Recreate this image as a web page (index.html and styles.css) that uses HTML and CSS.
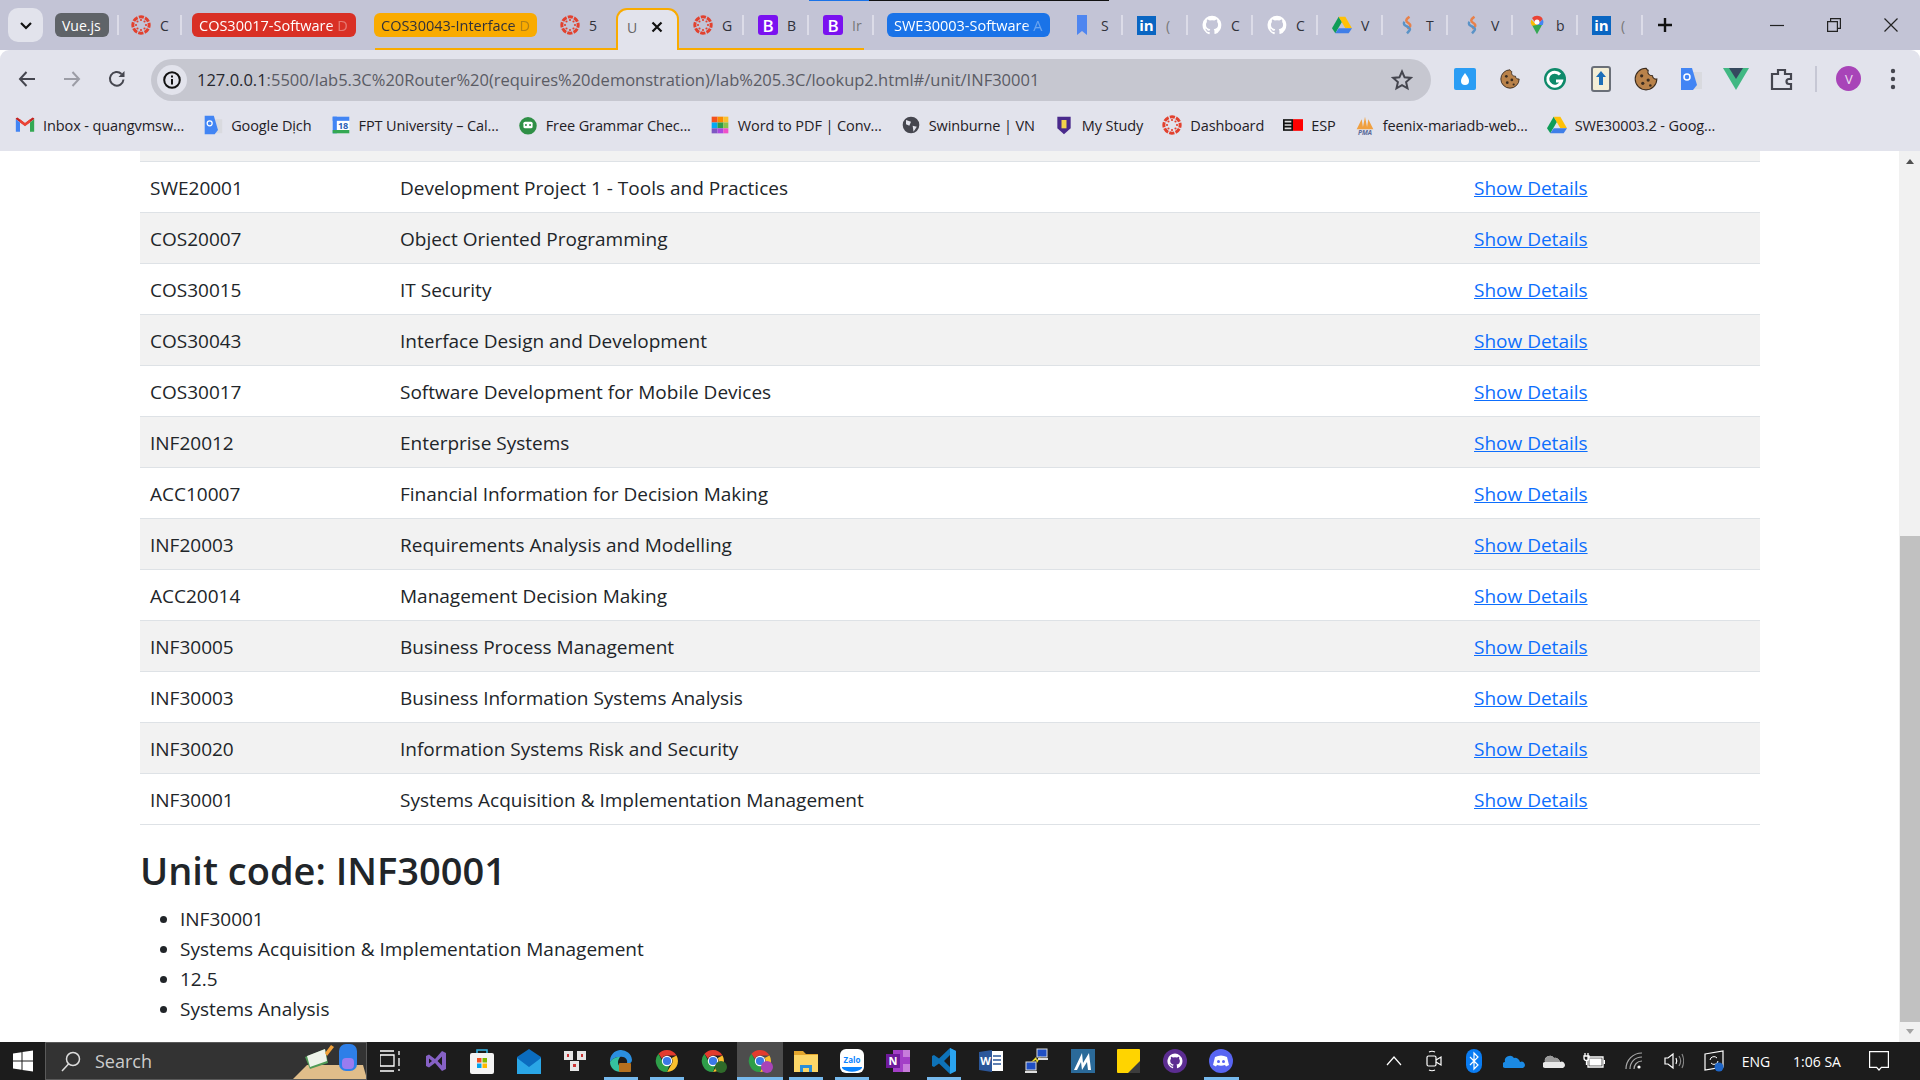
FILE: index.html
```html
<!DOCTYPE html>
<html lang="en">
<head>
    <meta charset="UTF-8">
    <meta name="viewport" content="width=device-width, initial-scale=1.0">
    <title>Unit lookup</title>
    <link rel="stylesheet" href="styles.css">
</head>
<body>
    <svg class="sprites" width="0" height="0">
        <symbol id="canvas" viewBox="0 0 24 24">
            <circle cx="12" cy="12" r="9.800" fill="none" stroke="#e2412e" stroke-width="3.600" stroke-dasharray="6.200 1.500" stroke-dashoffset="3"/>
            <g fill="#e2412e">
                <circle cx="12" cy="6" r="1.300"/><circle cx="12" cy="18" r="1.300"/>
                <circle cx="6" cy="12" r="1.300"/><circle cx="18" cy="12" r="1.300"/>
                <circle cx="7.800" cy="7.800" r="1.300"/><circle cx="16.200" cy="7.800" r="1.300"/>
                <circle cx="7.800" cy="16.200" r="1.300"/><circle cx="16.200" cy="16.200" r="1.300"/>
            </g>
        </symbol>
        <symbol id="github" viewBox="0 0 24 24">
            <path fill="#fff" d="M12 .8a11.4 11.4 0 0 0-3.600 22.200c.6.100.8-.2.800-.6v-2.100c-3.200.7-3.800-1.400-3.800-1.400-.5-1.300-1.300-1.700-1.300-1.700-1-.7.100-.7.100-.7 1.200.1 1.800 1.200 1.800 1.200 1 1.800 2.700 1.300 3.300 1 .1-.8.400-1.300.7-1.600-2.500-.3-5.200-1.300-5.200-5.600 0-1.200.4-2.200 1.200-3-.1-.3-.5-1.500.1-3 0 0 1-.3 3.100 1.200a11 11 0 0 1 5.700 0c2.200-1.500 3.100-1.200 3.100-1.200.6 1.600.2 2.700.1 3 .7.800 1.200 1.800 1.200 3 0 4.400-2.700 5.300-5.200 5.600.4.400.8 1 .8 2.100v3.100c0 .3.200.7.800.6A11.400 11.400 0 0 0 12 .8z"/>
        </symbol>
        <symbol id="drive" viewBox="0 0 24 22">
            <path fill="#0f9d58" d="M8 1 0 15l4 6 8-14z"/>
            <path fill="#ffc107" d="M8 1h8l8 14h-8z"/>
            <path fill="#3f7ee8" d="M4 21h16l4-6H8z"/>
        </symbol>
        <symbol id="flame" viewBox="0 0 24 24">
            <path fill="none" stroke="#e8814a" stroke-width="3" d="M15 2c-6 4-4 6-1 8s3 4-2 6"/>
            <path fill="none" stroke="#5b93c7" stroke-width="3" d="M9 8c-3 4 2 5 5 7s1 4-2 7"/>
        </symbol>
        <symbol id="maps" viewBox="0 0 24 24">
            <path fill="#34a853" d="M12 23 6 12h12z"/>
            <path fill="#ea4335" d="M12 1a8 8 0 0 0-6 2.700l6 8.300 7-7a8 8 0 0 0-7-4z"/>
            <path fill="#4285f4" d="M19 5a8 8 0 0 1 0 7l-7 0z"/>
            <path fill="#fbbc04" d="M5 5.500A8 8 0 0 0 6 13l6-1z"/>
            <circle cx="12" cy="8.500" r="3" fill="#fff"/>
        </symbol>
        <symbol id="translate" viewBox="0 0 24 24">
            <path fill="#d9dadf" d="M10 5h13v17H12z"/>
            <path fill="#4285f4" d="M2 1h11l5 17-4 5H2z"/>
            <circle cx="8" cy="10" r="3" fill="none" stroke="#fff" stroke-width="1.500"/>
        </symbol>
        <symbol id="cookie" viewBox="0 0 24 24">
            <path fill="#b9824a" stroke="#3a2c20" d="M12 2a10 10 0 1 0 10 10c-2 .5-4-1-4-3-3 0-5-2-4-5-1 0-1-1-2-2z"/>
            <circle cx="8" cy="9" r="1.500" fill="#3a2c20"/>
            <circle cx="14" cy="13" r="1.500" fill="#3a2c20"/>
            <circle cx="9" cy="16" r="1.500" fill="#3a2c20"/>
            <circle cx="16" cy="18" r="1.200" fill="#3a2c20"/>
        </symbol>
        <symbol id="chrome" viewBox="0 0 24 24">
            <path fill="#e33b2e" d="M12 1a11 11 0 0 1 9.500 5.500H12A5.500 5.500 0 0 0 7 9.800L3.500 4.800A11 11 0 0 1 12 1z"/>
            <path fill="#fbc02d" d="M21.500 6.500A11 11 0 0 1 12 23l4.800-8.300A5.500 5.500 0 0 0 16.700 9z"/>
            <path fill="#2e9e49" d="M3.500 4.800 7.800 13a5.500 5.500 0 0 0 6.500 3.500L12 23A11 11 0 0 1 3.500 4.800z"/>
            <circle cx="12" cy="12" r="5.200" fill="#fff"/>
            <circle cx="12" cy="12" r="4.100" fill="#3b78e7"/>
        </symbol>
    </svg>

    <div class="tabstrip">
        <span class="top-line"></span>
        <span class="group-line"></span>
        <button class="tab-search">
            <svg width="16" height="16" viewBox="0 0 16 16"><path d="M3 6l5 5 5-5" fill="none" stroke="#111" stroke-width="2.200"/></svg>
        </button>
        <span class="chip chip-vue">Vue.js</span>
        <div class="tab tab-first"><svg class="ico"><use href="#canvas"/></svg><span>C</span></div>
        <span class="chip chip-red"><span class="fade">COS30017-Software D</span></span>
        <span class="chip chip-orange"><span class="fade">COS30043-Interface D</span></span>
        <div class="tab tab-plain"><svg class="ico"><use href="#canvas"/></svg><span>5</span></div>
        <div class="tab-active">
            <span>U</span>
            <svg width="14" height="14" viewBox="0 0 14 14"><path d="M2.500 2.500l9 9m0-9l-9 9" stroke="#111" stroke-width="2.200"/></svg>
        </div>
        <div class="tab"><svg class="ico"><use href="#canvas"/></svg><span>G</span></div>
        <div class="tab"><span class="bs">B</span><span>B</span></div>
        <div class="tab"><span class="bs">B</span><span class="dim">Ir</span></div>
        <span class="chip chip-blue"><span class="fade">SWE30003-Software A</span></span>
        <div class="tab"><svg class="ico" viewBox="0 0 20 20"><path fill="#4f86f0" d="M5 0h10v20l-5-4-5 4z"/></svg><span>S</span></div>
        <div class="tab"><span class="in">in</span><span class="dim">(</span></div>
        <div class="tab"><svg class="ico"><use href="#github"/></svg><span>C</span></div>
        <div class="tab"><svg class="ico"><use href="#github"/></svg><span>C</span></div>
        <div class="tab"><svg class="ico"><use href="#drive"/></svg><span>V</span></div>
        <div class="tab"><svg class="ico"><use href="#flame"/></svg><span>T</span></div>
        <div class="tab"><svg class="ico"><use href="#flame"/></svg><span>V</span></div>
        <div class="tab"><svg class="ico"><use href="#maps"/></svg><span>b</span></div>
        <div class="tab"><span class="in">in</span><span class="dim">(</span></div>
        <svg class="new-tab" width="16" height="16" viewBox="0 0 16 16"><path d="M8 1v14M1 8h14" stroke="#111" stroke-width="2.400"/></svg>
        <div class="window-btns">
            <svg width="14" height="14" viewBox="0 0 14 14"><path d="M0 7.500h14" stroke="#222" stroke-width="1.200"/></svg>
            <svg width="14" height="14" viewBox="0 0 14 14"><path d="M.6 3.600h9.800v9.800H.6zM3.600 3.400V.6h9.800v9.800h-2.800" fill="none" stroke="#222" stroke-width="1.200"/></svg>
            <svg width="14" height="14" viewBox="0 0 14 14"><path d="M.5.500l13 13m0-13l-13 13" stroke="#222" stroke-width="1.200"/></svg>
        </div>
    </div>

    <div class="toolbar">
        <div class="nav-btns">
            <svg width="20" height="20" viewBox="0 0 20 20"><path d="M18 10H3m6.500-7L3 10l6.500 7" fill="none" stroke="#45464f" stroke-width="2"/></svg>
            <svg width="20" height="20" viewBox="0 0 20 20"><path d="M2 10h15m-6.500-7L17 10l-6.500 7" fill="none" stroke="#9c9da6" stroke-width="2"/></svg>
            <svg width="20" height="20" viewBox="0 0 20 20"><path d="M16.500 10.500A6.800 6.800 0 1 1 14.500 5" fill="none" stroke="#45464f" stroke-width="2"/><path d="M17.500 2v6h-6z" fill="#45464f"/></svg>
        </div>
        <div class="omnibox">
            <span class="site-info">
                <svg width="20" height="20" viewBox="0 0 20 20"><circle cx="10" cy="10" r="7.800" fill="none" stroke="#111" stroke-width="2"/><path d="M10 9v5.500M10 5.500v2" stroke="#111" stroke-width="2"/></svg>
            </span>
            <span class="url">127.0.0.1<span class="url-path">:5500/lab5.3C%20Router%20(requires%20demonstration)/lab%205.3C/lookup2.html#/unit/INF30001</span></span>
            <svg class="star" width="22" height="22" viewBox="0 0 22 22"><path d="M11 2.500l2.600 5.800 6.200.6-4.700 4.200 1.400 6.200L11 16.100l-5.500 3.200 1.400-6.200-4.700-4.200 6.200-.6z" fill="none" stroke="#45464f" stroke-width="2"/></svg>
        </div>
        <div class="extensions">
            <span class="ext"><svg width="24" height="24" viewBox="0 0 24 24"><rect x="1" y="1" width="22" height="22" rx="2" fill="#2a9df4"/><path d="M12 6c3 4 4 6 4 8a4 4 0 0 1-8 0c0-2 1-4 4-8z" fill="#fff"/></svg></span>
            <span class="ext"><svg width="22" height="22" viewBox="0 0 24 24"><use href="#cookie"/></svg></span>
            <span class="ext"><svg width="24" height="24" viewBox="0 0 24 24"><circle cx="12" cy="12" r="11" fill="#0e8a6a"/><path d="M17 7.500A7 7 0 1 0 18.500 14H13" fill="none" stroke="#fff" stroke-width="3"/></svg></span>
            <span class="ext"><svg width="24" height="26" viewBox="0 0 24 26"><rect x="3" y="1" width="18" height="24" rx="2" fill="#f3eed6" stroke="#6a6f78" stroke-width="2"/><path d="M12 5l5 6h-3v8h-4v-8H7z" fill="#1c6fb8"/></svg></span>
            <span class="ext"><svg width="26" height="26" viewBox="0 0 24 24"><use href="#cookie"/></svg></span>
            <span class="ext"><svg width="24" height="24" viewBox="0 0 24 24"><use href="#translate"/></svg></span>
            <span class="ext"><svg width="26" height="24" viewBox="0 0 26 24"><path d="M0 1h26L13 23z" fill="#41b883"/><path d="M6 1h14l-7 11z" fill="#35495e"/></svg></span>
            <span class="ext"><svg width="24" height="24" viewBox="0 0 24 24"><path d="M2 7h6V3h7v4h6v5h-2a2.500 2.500 0 0 0 0 5h2v5H2z" fill="none" stroke="#45464f" stroke-width="2.200"/></svg></span>
            <span class="ext-sep"></span>
            <span class="avatar">V</span>
            <svg class="menu" width="6" height="24" viewBox="0 0 6 24"><circle cx="3" cy="4" r="2.200" fill="#45464f"/><circle cx="3" cy="12" r="2.200" fill="#45464f"/><circle cx="3" cy="20" r="2.200" fill="#45464f"/></svg>
        </div>
    </div>

    <div class="bookmarks">
        <a class="bm"><svg class="bm-ico" viewBox="0 0 24 24"><path fill="#c5221f" d="M1 5l11 8 11-8v-1l-2-1-9 7-9-7-2 1z"/><path fill="#4285f4" d="M1 5v15h5V9z"/><path fill="#34a853" d="M23 5v15h-5V9z"/><path fill="#ea4335" d="M6 9l6 4.500L18 9V5l-6 4.500L6 5z"/></svg><span>Inbox - quangvmsw...</span></a>
        <a class="bm"><svg class="bm-ico"><use href="#translate"/></svg><span>Google Dịch</span></a>
        <a class="bm"><svg class="bm-ico" viewBox="0 0 24 24"><rect x="2" y="2" width="20" height="20" fill="#fff"/><path d="M2 2h20v5H2z" fill="#4285f4"/><path d="M2 2h5v20H2z" fill="#4285f4"/><path d="M2 18h20v4H2z" fill="#34a853"/><text x="14.500" y="16.500" text-anchor="middle" class="cal-num">18</text></svg><span>FPT University – Cal...</span></a>
        <a class="bm"><svg class="bm-ico" viewBox="0 0 24 24"><circle cx="12" cy="13" r="10.500" fill="#2f8f46"/><rect x="6.500" y="8" width="11" height="8" rx="2" fill="#fff"/><circle cx="9.500" cy="12" r="1.200" fill="#2f8f46"/><circle cx="14.500" cy="12" r="1.200" fill="#2f8f46"/></svg><span>Free Grammar Chec...</span></a>
        <a class="bm"><svg class="bm-ico" viewBox="0 0 24 24"><path fill="#f4511e" d="M2 2h7v7H2z"/><path fill="#fb8c00" d="M9 2h7v7H9z"/><path fill="#fbc02d" d="M16 2h6v7h-6z"/><path fill="#03a9f4" d="M2 9h7v7H2z"/><path fill="#2e9e49" d="M9 9h7v7H9z"/><path fill="#8bc34a" d="M16 9h6v7h-6z"/><path fill="#7e57c2" d="M2 16h7v6H2z"/><path fill="#ab47e0" d="M9 16h7v6H9z"/><path fill="#f050c8" d="M16 16h6v6h-6z"/></svg><span>Word to PDF | Conv...</span></a>
        <a class="bm"><svg class="bm-ico" viewBox="0 0 24 24"><circle cx="12" cy="12" r="10" fill="#45464f"/><path d="M6 6l6 2-2 5-4-2zM14 13l5 1-4 6z" fill="#e2e3ec"/></svg><span>Swinburne | VN</span></a>
        <a class="bm"><svg class="bm-ico" viewBox="0 0 24 24"><path d="M4 2h16v14l-8 7-8-7z" fill="#4a2a8c"/><path d="M9 6h6v10H9z" fill="#f2d34b"/></svg><span>My Study</span></a>
        <a class="bm"><svg class="bm-ico"><use href="#canvas"/></svg><span>Dashboard</span></a>
        <a class="bm"><svg class="bm-ico" viewBox="0 0 24 24"><rect y="5" width="12" height="14" fill="#111"/><rect x="12" y="5" width="12" height="14" fill="#f00"/><path d="M2 8h8M2 12h8M2 16h8" stroke="#ddd" stroke-width="2"/></svg><span>ESP</span></a>
        <a class="bm"><svg class="bm-ico" viewBox="0 0 24 24"><path d="M2 17L8 5l2 12zM9 17l3-15 3 15zM14 17l2-12 6 12z" fill="#f0a040"/><text x="12" y="24" text-anchor="middle" class="pma">PMA</text></svg><span>feenix-mariadb-web...</span></a>
        <a class="bm"><svg class="bm-ico"><use href="#drive"/></svg><span>SWE30003.2 - Goog...</span></a>
    </div>

    <div class="viewport">
        <main class="page">
            <table class="units">
                <colgroup>
                    <col class="col-code">
                    <col>
                    <col class="col-link">
                </colgroup>
                <tr class="cut-row"><td colspan="3"></td></tr>
                <tr><td>SWE20001</td><td>Development Project 1 - Tools and Practices</td><td><a href="#">Show Details</a></td></tr>
                <tr><td>COS20007</td><td>Object Oriented Programming</td><td><a href="#">Show Details</a></td></tr>
                <tr><td>COS30015</td><td>IT Security</td><td><a href="#">Show Details</a></td></tr>
                <tr><td>COS30043</td><td>Interface Design and Development</td><td><a href="#">Show Details</a></td></tr>
                <tr><td>COS30017</td><td>Software Development for Mobile Devices</td><td><a href="#">Show Details</a></td></tr>
                <tr><td>INF20012</td><td>Enterprise Systems</td><td><a href="#">Show Details</a></td></tr>
                <tr><td>ACC10007</td><td>Financial Information for Decision Making</td><td><a href="#">Show Details</a></td></tr>
                <tr><td>INF20003</td><td>Requirements Analysis and Modelling</td><td><a href="#">Show Details</a></td></tr>
                <tr><td>ACC20014</td><td>Management Decision Making</td><td><a href="#">Show Details</a></td></tr>
                <tr><td>INF30005</td><td>Business Process Management</td><td><a href="#">Show Details</a></td></tr>
                <tr><td>INF30003</td><td>Business Information Systems Analysis</td><td><a href="#">Show Details</a></td></tr>
                <tr><td>INF30020</td><td>Information Systems Risk and Security</td><td><a href="#">Show Details</a></td></tr>
                <tr><td>INF30001</td><td>Systems Acquisition &amp; Implementation Management</td><td><a href="#">Show Details</a></td></tr>
            </table>
            <h2>Unit code: INF30001</h2>
            <ul>
                <li>INF30001</li>
                <li>Systems Acquisition &amp; Implementation Management</li>
                <li>12.5</li>
                <li>Systems Analysis</li>
            </ul>
        </main>
        <div class="scrollbar">
            <span class="arrow arrow-up"></span>
            <span class="thumb"></span>
            <span class="arrow arrow-down"></span>
        </div>
    </div>

    <footer class="taskbar">
        <span class="start">
            <svg width="22" height="22" viewBox="0 0 22 22"><path fill="#fff" d="M1 3.500l8.500-1.200v8.200H1zM10.500 2.100L21 .6v9.900H10.500zM1 11.500h8.500v8.200L1 18.500zM10.500 11.500H21v9.900l-10.500-1.500z"/></svg>
        </span>
        <div class="search">
            <svg width="22" height="22" viewBox="0 0 22 22"><circle cx="13" cy="9" r="6.500" fill="none" stroke="#ddd" stroke-width="1.500"/><path d="M8.500 14L2 21" stroke="#ddd" stroke-width="1.500"/></svg>
            <span>Search</span>
            <svg class="search-art" width="74" height="38" viewBox="0 0 74 38"><path d="M0 38l14-14h56l4 14z" fill="#e0bd8a"/><path d="M12 16l20-8 3 14-18 6z" fill="#4f9a55"/><path d="M14 15l18-7 2 12-17 6z" fill="#eef3ea"/><path d="M32 12l6-8 3 2-7 9z" fill="#f2a23a"/><rect x="46" y="3" width="18" height="27" rx="7" fill="#2e7fe8"/><rect x="49" y="17" width="12" height="11" rx="4" fill="#9a7cf0"/></svg>
        </div>
        <div class="apps">
            <span class="app"><svg width="20" height="22" viewBox="0 0 20 22" fill="none" stroke="#fff" stroke-width="1.300"><path d="M0 1h14M0 5h14v11H0zM0 21h14M19 1v4M19 8v8M19 19v2"/></svg></span>
            <span class="app"><svg width="22" height="24" viewBox="0 0 22 24"><path fill="#8661c5" d="M1 7l3-1.500L10 10 17 2l4 2v16l-4 2-7-8-6 4.500L1 17zM4 9.500v5L7 12zM17 7.500L12.500 12l4.500 4.500z"/></svg></span>
            <span class="app"><svg width="24" height="26" viewBox="0 0 24 26"><rect y="5" width="24" height="21" rx="2" fill="#f3f3f3"/><path d="M7 5V2h10v3" fill="none" stroke="#35b6e8" stroke-width="1.500"/><path fill="#f25022" d="M7 10h4.500v4.500H7z"/><path fill="#7fba00" d="M12.500 10H17v4.500h-4.500z"/><path fill="#00a4ef" d="M7 15.500h4.500V20H7z"/><path fill="#ffb900" d="M12.500 15.500H17V20h-4.500z"/></svg></span>
            <span class="app"><svg width="24" height="26" viewBox="0 0 24 26"><path fill="#0b6cbf" d="M0 9l12-8 12 8v4L12 20 0 13z"/><path fill="#2aa6e6" d="M0 10v16h24V10l-12 9z"/></svg></span>
            <span class="app"><svg width="24" height="24" viewBox="0 0 24 24"><rect x="1" y="2" width="9" height="9" fill="#e6e6e6"/><rect x="14" y="2" width="9" height="9" fill="#e6e6e6"/><rect x="7" y="12" width="9" height="10" fill="#e6e6e6"/><rect x="4" y="5" width="2" height="3" fill="#c33"/><rect x="18" y="5" width="2" height="3" fill="#c33"/><rect x="10" y="15" width="3" height="3" fill="#c33"/></svg></span>
            <span class="app run-edge"><svg width="24" height="24" viewBox="0 0 24 24"><path d="M1 13A11 11 0 0 1 23 11c0 3-3 4-5 3 1-3-2-7-7-6-5 0-8 2-10 5z" fill="#2b8fe0"/><path d="M1 13c0 6 5 10 11 10 4 0 7-2 9-5-6 3-12 1-12-5 0-2 1-3 2-5-5 0-8 2-10 5z" fill="#35c1a0"/><rect x="10" y="14" width="12" height="9" rx="1" fill="#b5701f"/></svg></span>
            <span class="app running"><svg width="24" height="24"><use href="#chrome"/></svg></span>
            <span class="app"><svg width="24" height="24"><use href="#chrome"/></svg><i class="badge badge-green"></i></span>
            <span class="app running active"><svg width="24" height="24"><use href="#chrome"/></svg><i class="badge badge-purple"></i></span>
            <span class="app running"><svg width="24" height="22" viewBox="0 0 24 22"><path fill="#e3a62d" d="M0 1h9l3 3h12v3H0z"/><path fill="#fcd667" d="M0 5h24v17H0z"/><path fill="#2a8fd8" d="M6 15h12v7h-3v-4H9v4H6z"/></svg></span>
            <span class="app running"><svg width="24" height="24" viewBox="0 0 24 24"><path d="M6 0h12a6 6 0 0 1 6 6v12a6 6 0 0 1-6 6H6a6 6 0 0 1-6-6V6a6 6 0 0 1 6-6z" fill="#fff"/><path d="M2 19c4 5 16 5 20 0v-1H2z" fill="#0a84ff"/><text x="12" y="14" text-anchor="middle" class="zalo">Zalo</text></svg></span>
            <span class="app"><svg width="24" height="24" viewBox="0 0 24 24"><path fill="#a33fc7" d="M7 1h17v22H7z"/><path fill="#c77ddb" d="M17 1h7v7h-7zM17 15h7v8h-7z"/><rect y="5" width="14" height="14" fill="#6f1a9b"/><text x="7" y="16" text-anchor="middle" class="letter">N</text></svg></span>
            <span class="app running"><svg width="24" height="26" viewBox="0 0 24 26"><path fill="#0e73b9" d="M18 0l6 3v20l-6 3L7 15.500 2 19l-2-1V8l2-1 5 3.500zm0 7l-6 6 6 6z"/><path fill="#2aa4f0" d="M18 0l6 3v20l-6 3z"/></svg></span>
            <span class="app"><svg width="24" height="24" viewBox="0 0 24 24"><rect x="8" y="2" width="16" height="20" fill="#fff"/><path d="M14 7h8M14 11h8M14 15h8" stroke="#2b579a" stroke-width="1.500"/><path fill="#2b579a" d="M0 3l13-2v22L0 21z"/><text x="6.500" y="16" text-anchor="middle" class="letter">W</text></svg></span>
            <span class="app"><svg width="24" height="26" viewBox="0 0 24 26"><rect x="12" y="1" width="10" height="8" fill="#1f4fc4" stroke="#ddd"/><rect x="1" y="14" width="10" height="8" fill="#1f4fc4" stroke="#ddd"/><path d="M6 14l5-5 1 3 4-4-4 7-1-3z" fill="#f2e333"/><path d="M0 24h12M13 11h10" stroke="#ddd" stroke-width="2"/></svg></span>
            <span class="app"><svg width="24" height="24" viewBox="0 0 24 24"><rect width="24" height="24" fill="#2b6a99"/><path d="M3 21L11 4l1 10 6-10 2 17h-3l-1-8-5 8-1-8-4 8z" fill="#fff"/></svg></span>
            <span class="app"><svg width="24" height="24" viewBox="0 0 24 24"><rect width="23" height="24" rx="1" fill="#ffd400"/><path d="M23 12v12H11z" fill="#3c3c3c"/></svg></span>
            <span class="app"><svg width="24" height="24" viewBox="0 0 24 24"><circle cx="12" cy="12" r="12" fill="#5c2d91"/><svg x="4" y="4" width="16" height="16" viewBox="0 0 24 24"><use href="#github"/></svg></svg></span>
            <span class="app running"><svg width="24" height="24" viewBox="0 0 24 24"><circle cx="12" cy="12" r="12" fill="#5865f2"/><path d="M6 8c4-2 8-2 12 0l2 8-3 1.500-1-1.500c-3 1-5 1-8 0l-1 1.500L4 16z" fill="#fff"/><circle cx="9.500" cy="12.500" r="1.500" fill="#5865f2"/><circle cx="14.500" cy="12.500" r="1.500" fill="#5865f2"/></svg></span>
        </div>
        <div class="tray">
            <span class="tray-ico"><svg width="16" height="10" viewBox="0 0 16 10"><path d="M1 9l7-8 7 8" fill="none" stroke="#fff" stroke-width="1.200"/></svg></span>
            <span class="tray-ico"><svg width="16" height="22" viewBox="0 0 16 22" fill="none" stroke="#fff" stroke-width="1.200"><rect x="1" y="6" width="9" height="10" rx="1.500"/><path d="M10 10l5-3v8l-5-3M3 2c2-1 4-1 6 0M3 20c2 1 4 1 6 0"/></svg></span>
            <span class="tray-ico"><svg width="16" height="24" viewBox="0 0 16 24"><rect width="16" height="24" rx="8" fill="#0a7cf2"/><path d="M4 8l8 8-4 4V4l4 4-8 8" fill="none" stroke="#fff" stroke-width="1.200"/></svg></span>
            <span class="tray-ico"><svg width="22" height="16" viewBox="0 0 22 16"><path d="M3 15a3 3 0 0 1-1-6 5 5 0 0 1 9-4 5 5 0 0 1 6 4 3 3 0 0 1 3 6z" fill="#1b8ae4"/></svg></span>
            <span class="tray-ico"><svg width="22" height="16" viewBox="0 0 22 16"><path d="M3 15a3 3 0 0 1-1-6 5 5 0 0 1 9-4 5 5 0 0 1 6 4 3 3 0 0 1 3 6z" fill="#e8e8e8"/><path d="M2 9a5 5 0 0 1 9-4 5 5 0 0 1 6 4z" fill="#9a9a9a"/></svg></span>
            <span class="tray-ico"><svg width="22" height="16" viewBox="0 0 22 16" fill="none" stroke="#fff" stroke-width="1.300"><path d="M5 4h15v10H5zM21.500 7v4"/><path d="M2 0v3M5 0v3M1 3h5v2a2.500 2.500 0 0 1-5 0zM3.500 7v5" /><rect x="7" y="6" width="11" height="6" fill="#fff"/></svg></span>
            <span class="tray-ico"><svg width="18" height="18" viewBox="0 0 18 18" fill="none" stroke="#aaa" stroke-width="1.200"><path d="M1 17C1 8 8 1 17 1M5 17c0-7 5-12 12-12M9 17c0-4 3-8 8-8"/><circle cx="14" cy="15" r="1.600" fill="#fff" stroke="none"/></svg></span>
            <span class="tray-ico"><svg width="20" height="18" viewBox="0 0 20 18" fill="none" stroke="#fff" stroke-width="1.200"><path d="M1 6h3l5-4v14l-5-4H1z"/><path d="M12 6c1 2 1 4 0 6" /><path d="M15 4c2 3 2 7 0 10M18 2c2 4 2 10 0 14" stroke="#888"/></svg></span>
            <span class="tray-ico"><svg width="20" height="22" viewBox="0 0 20 22"><path d="M1 4l18-3v16L1 20z" fill="none" stroke="#fff" stroke-width="1.200"/><path d="M6 10a4 4 0 0 1 7-2m1 3a4 4 0 0 1-7 2" fill="none" stroke="#fff"/><circle cx="15" cy="17" r="4.500" fill="#1f66c7"/></svg></span>
            <span class="tray-text tray-lang">ENG</span>
            <span class="tray-text tray-time">1:06 SA</span>
            <span class="tray-note"><svg width="20" height="20" viewBox="0 0 20 20"><path d="M.6.600h18.800v15.800h-7L10 19l-2.400-2.600h-7z" fill="none" stroke="#fff" stroke-width="1.200"/></svg></span>
        </div>
    </footer>
</body>
</html>
```
FILE: styles.css
```css
html, body {
    margin: 0;
    padding: 0;
    height: 100%;
    overflow: hidden;
}

body {
    display: flex;
    flex-direction: column;
    font-family: "Open Sans", "Noto Sans", sans-serif;
    background: #fff;
    color: #212529;
}

.sprites {
    position: absolute;
}

/* tab strip */
.tabstrip {
    position: relative;
    display: flex;
    align-items: center;
    height: 50px;
    padding-left: 8px;
    background: #c3c4d6;
    font-size: 14px;
    color: #30313a;
    box-sizing: border-box;
}

.top-line {
    position: absolute;
    top: 0;
    left: 809px;
    width: 300px;
    height: 1px;
    background: linear-gradient(to right, #1a73e8 60px, #111 60px);
}

.group-line {
    position: absolute;
    left: 375px;
    bottom: 0;
    width: 489px;
    height: 2px;
    background: #f9ab00;
}

.tab-search {
    display: flex;
    align-items: center;
    justify-content: center;
    width: 35px;
    height: 34px;
    margin-right: 12px;
    padding: 0;
    border: none;
    border-radius: 10px;
    background: #e2e3ec;
}

.chip {
    display: flex;
    align-items: center;
    flex-shrink: 0;
    height: 24px;
    padding: 0 7px;
    border-radius: 6px;
    box-sizing: border-box;
    font-size: 14.500px;
    white-space: nowrap;
    overflow: hidden;
    color: #fff;
}

.chip-vue {
    width: 54px;
    font-size: 14px;
    background: #5f6368;
}

.chip-red {
    width: 164px;
    margin-left: 8px;
    background: #d93025;
}

.chip-orange {
    width: 163px;
    margin-left: 18px;
    background: #f9ab00;
    color: #30313a;
}

.chip-blue {
    width: 163px;
    margin-left: 13px;
    margin-right: 8px;
    background: #1a73e8;
}

.fade {
    -webkit-mask-image: linear-gradient(to right, #000 88%, rgba(0, 0, 0, 0.35) 93%);
    mask-image: linear-gradient(to right, #000 88%, rgba(0, 0, 0, 0.35) 93%);
}

.tab {
    position: relative;
    display: flex;
    align-items: center;
    flex-shrink: 0;
    gap: 9px;
    width: 65px;
    height: 24px;
    padding-left: 14px;
    box-sizing: border-box;
}

.tab::after {
    content: "";
    position: absolute;
    right: 0;
    top: 2px;
    width: 2px;
    height: 20px;
    background: #dcdce8;
}

.tab-first {
    margin-left: 8px;
    margin-right: 2px;
}

.tab-first::before {
    content: "";
    position: absolute;
    left: 0;
    top: 2px;
    width: 2px;
    height: 20px;
    background: #dcdce8;
}

.tab-plain {
    margin-left: 9px;
    width: 70px;
}

.tab-plain::after {
    display: none;
}

.tab-active {
    position: relative;
    display: flex;
    align-items: center;
    justify-content: space-between;
    width: 63px;
    height: 42px;
    margin-top: 8px;
    padding: 0 13px 6px 9px;
    border: 2px solid #f9ab00;
    border-bottom: none;
    border-radius: 11px 11px 0 0;
    background: #e2e3ec;
    box-sizing: border-box;
    color: #666;
}

.ico {
    width: 20px;
    height: 20px;
    flex-shrink: 0;
}

.dim {
    color: #777;
}

.bs {
    display: flex;
    align-items: center;
    justify-content: center;
    flex-shrink: 0;
    width: 20px;
    height: 20px;
    border-radius: 3px;
    background: #7a12f0;
    color: #fff;
    font-size: 17px;
    font-weight: 600;
}

.in {
    display: flex;
    align-items: center;
    justify-content: center;
    flex-shrink: 0;
    width: 19px;
    height: 19px;
    margin: 0 1px 0 0;
    background: #0a66c2;
    color: #fff;
    font-size: 15px;
    font-weight: 700;
}

.new-tab {
    margin-left: 14px;
}

.window-btns {
    display: flex;
    align-items: center;
    gap: 43px;
    margin-left: auto;
    padding-right: 22px;
}

/* toolbar */
.toolbar {
    display: flex;
    align-items: center;
    height: 51px;
    padding-top: 6px;
    background: #e2e3ec;
    border-radius: 9px 9px 0 0;
    box-sizing: border-box;
}

.nav-btns {
    display: flex;
    align-items: center;
    gap: 25px;
    width: 151px;
    padding-left: 17px;
    box-sizing: border-box;
}

.omnibox {
    display: flex;
    align-items: center;
    width: 1280px;
    height: 42px;
    margin-top: 2px;
    border-radius: 21px;
    background: #c6c7d0;
}

.site-info {
    display: flex;
    align-items: center;
    justify-content: center;
    width: 30px;
    height: 30px;
    margin-left: 6px;
    border-radius: 50%;
    background: #e2e3ec;
}

.url {
    margin-left: 10px;
    font-size: 16.500px;
    color: #26272e;
    white-space: nowrap;
}

.url-path {
    color: #5a5b64;
}

.star {
    margin-left: auto;
    margin-right: 18px;
}

.extensions {
    display: flex;
    align-items: center;
    padding-left: 11px;
}

.ext {
    display: flex;
    align-items: center;
    justify-content: center;
    width: 45.300px;
    height: 30px;
}

.ext-sep {
    width: 2px;
    height: 26px;
    margin: 0 19px 0 11px;
    background: #c6c7d4;
}

.avatar {
    display: flex;
    align-items: center;
    justify-content: center;
    width: 25px;
    height: 25px;
    border-radius: 50%;
    background: #a844b8;
    color: #ece0f0;
    font-size: 13px;
}

.menu {
    margin-left: 29px;
}

/* bookmarks */
.bookmarks {
    display: flex;
    align-items: center;
    gap: 19px;
    height: 50px;
    padding: 0 0 2px 15px;
    background: #e2e3ec;
    box-sizing: border-box;
    font-size: 14.500px;
    letter-spacing: -0.1px;
    color: #1f2026;
}

.bm {
    display: flex;
    align-items: center;
    gap: 8px;
    white-space: nowrap;
}

.bm-ico {
    width: 20px;
    height: 20px;
    flex-shrink: 0;
}

.cal-num {
    font: 700 11px "Open Sans", sans-serif;
    fill: #2b5fb8;
}

.pma {
    font: italic 700 8px "Open Sans", sans-serif;
    fill: #5a6a9a;
}

/* page content */
.viewport {
    flex: 1;
    display: flex;
    min-height: 0;
}

.page {
    flex: 1;
    padding: 0 139px 0 140px;
    overflow: hidden;
    font-size: 19px;
    line-height: 30px;
}

.units {
    width: 100%;
    margin-bottom: 20px;
    border-collapse: collapse;
    table-layout: fixed;
}

.col-code {
    width: 250px;
}

.col-link {
    width: 296px;
}

.units td {
    padding: 11px 10px 9px;
    border-bottom: 1px solid #dee2e6;
}

.units tr:nth-child(odd) td {
    background: #f2f2f2;
}

.units .cut-row td {
    height: 10px;
    padding: 0;
}

.units a {
    color: #0d6efd;
}

h2 {
    margin: 0 0 10px;
    padding-top: 1px;
    font-size: 38px;
    font-weight: 600;
    line-height: 48px;
}

ul {
    margin: 0;
    padding-left: 40px;
}

.scrollbar {
    display: flex;
    flex-direction: column;
    width: 21px;
    background: #f1f1f1;
}

.arrow {
    flex-shrink: 0;
    box-sizing: border-box;
    border-left: 4px solid transparent;
    border-right: 4px solid transparent;
    width: 8px;
    align-self: center;
}

.arrow-up {
    height: 5px;
    margin-top: 8px;
    border-bottom: 5px solid #505050;
}

.arrow-down {
    height: 5px;
    margin-bottom: 8px;
    margin-top: 7px;
    border-top: 5px solid #a3a3a3;
}

.thumb {
    height: 486px;
    margin: 372px 0 0 1px;
    background: #c1c1c1;
}

/* taskbar */
.taskbar {
    display: flex;
    align-items: center;
    flex-shrink: 0;
    height: 38px;
    background: #1c1c1c;
    color: #fff;
}

.start {
    display: flex;
    align-items: center;
    justify-content: center;
    width: 45px;
    height: 100%;
}

.search {
    position: relative;
    display: flex;
    align-items: center;
    gap: 13px;
    width: 322px;
    height: 100%;
    padding-left: 14px;
    border: 1px solid #5a5a5a;
    background: #333;
    box-sizing: border-box;
    font-size: 18px;
    color: #ccc;
    overflow: hidden;
}

.search-art {
    position: absolute;
    right: -1px;
    bottom: 0;
}

.apps {
    display: flex;
    height: 100%;
}

.app {
    position: relative;
    display: flex;
    align-items: center;
    justify-content: center;
    width: 46.200px;
    height: 100%;
    box-sizing: border-box;
}

.running::after, .run-edge::after {
    content: "";
    position: absolute;
    left: 6px;
    right: 6px;
    bottom: 0;
    height: 3px;
    background: #76b9ed;
}

.active {
    background: #4d4d4d;
}

.active::after {
    left: 0;
    right: 0;
}

.badge {
    position: absolute;
    right: 10px;
    bottom: 7px;
    width: 12px;
    height: 12px;
    border-radius: 50%;
}

.badge-green {
    background: #2f6b2a;
}

.badge-purple {
    background: #a844b8;
}

.zalo {
    font: 700 8px "Open Sans", sans-serif;
    fill: #0a84ff;
}

.letter {
    font: 700 11px "Open Sans", sans-serif;
    fill: #fff;
}

.tray {
    display: flex;
    align-items: center;
    height: 100%;
    margin-left: auto;
    padding-right: 18px;
}

.tray-ico {
    display: flex;
    align-items: center;
    justify-content: center;
    width: 40px;
    height: 100%;
}

.tray-text {
    text-align: center;
    font-size: 14px;
    white-space: nowrap;
}

.tray-lang {
    width: 44px;
}

.tray-time {
    width: 78px;
}

.tray-note {
    display: flex;
    align-items: center;
    justify-content: center;
    width: 46px;
}
```
